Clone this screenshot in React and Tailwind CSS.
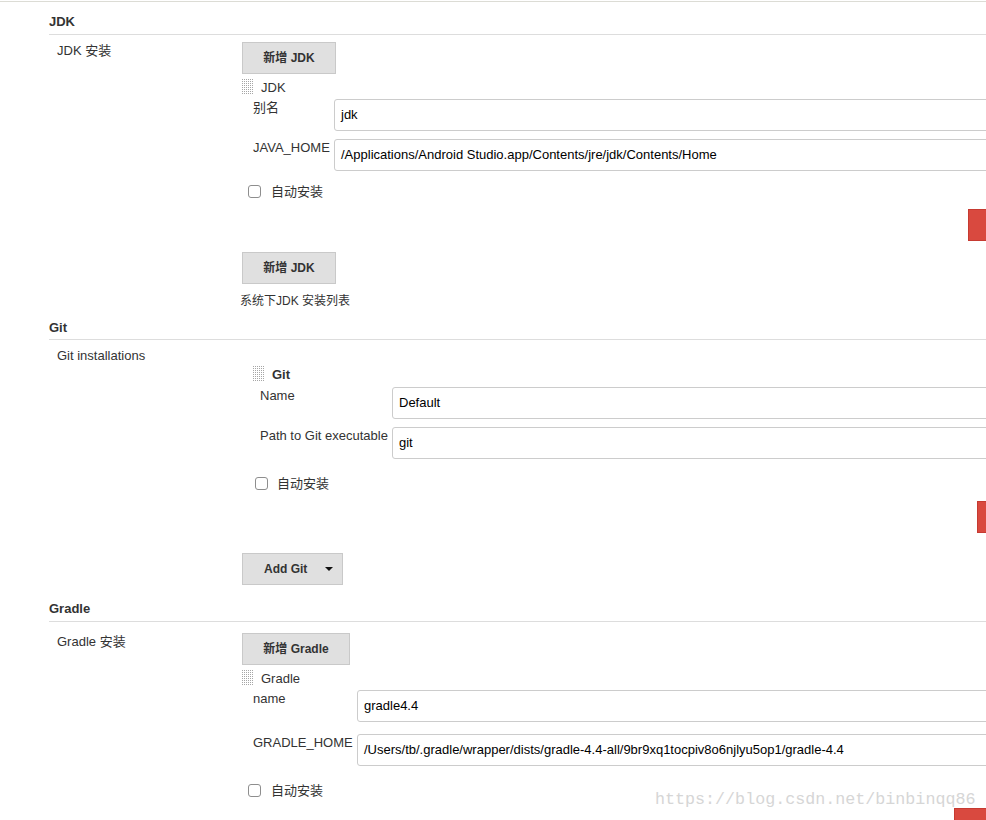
import React from 'react';

const Handle = ({ id }) => (
  <svg width="11" height="16" className="shrink-0">
    <defs>
      <pattern id={id} width="2" height="2" patternUnits="userSpaceOnUse">
        <rect width="1" height="1" fill="#a6a6a6" />
      </pattern>
    </defs>
    <rect width="11" height="16" fill={`url(#${id})`} />
  </svg>
);

const Btn = ({ children, className }) => (
  <div
    className={
      'flex items-center justify-center h-[32px] bg-[#e0e0e0] border border-[#c9c9c9] font-bold text-[12px] text-[#333] ' +
      className
    }
  >
    {children}
  </div>
);

const Field = ({ label, value, labelClass, className }) => (
  <div className={'flex ' + className}>
    <div className={'shrink-0 leading-4 pt-px ' + labelClass}>{label}</div>
    <div className="flex-1 h-[32px] border border-[#cccccc] rounded-[3px] flex items-center px-[6px] text-black">
      {value}
    </div>
  </div>
);

const AutoInstall = ({ className }) => (
  <div className={'flex items-center h-4 ' + className}>
    <span className="w-[13px] h-[13px] border border-[#8e8e8e] rounded-[3px] bg-white" />
    <span className="pt-px">自动安装</span>
  </div>
);

// delete button: only its left edge shows inside the window
const DeleteBtn = ({ className }) => (
  <div
    aria-label="删除"
    className={'h-[32px] w-[120px] bg-[#d9493f] border border-[#c63a31] ' + className}
  />
);

const SectionHeader = ({ title, className }) => (
  <div className={'flex items-end font-bold border-b border-[#dddddd] ' + className}>{title}</div>
);

export default function App() {
  return (
    <div className="relative w-[986px] h-[820px] overflow-hidden bg-white font-['Liberation_Sans','Noto_Sans_CJK_SC',sans-serif] text-[13px] leading-4 text-[#333]">
      <div className="mt-px border-t border-[#dcdcd5]" />
      <div className="pl-[49px] w-[1100px]">
        {/* JDK */}
        <SectionHeader title="JDK" className="h-[33px] pb-[4px]" />
        <div className="flex">
          <div className="w-[193px] shrink-0 pl-[8px] pt-[8px]">JDK 安装</div>
          <div className="w-[800px] pt-[7px]">
            <Btn className="w-[94px]">新增 JDK</Btn>
            <div className="mt-[5px] flex items-center h-4">
              <Handle id="h1" />
              <span className="ml-[8px] pt-px">JDK</span>
            </div>
            <Field label="别名" value="jdk" labelClass="w-[92px] pl-[11px]" className="mt-[4px]" />
            <Field
              label="JAVA_HOME"
              value="/Applications/Android Studio.app/Contents/jre/jdk/Contents/Home"
              labelClass="w-[92px] pl-[11px]"
              className="mt-[8px]"
            />
            <AutoInstall className="mt-[12px] pl-[6px] gap-[10px]" />
            <DeleteBtn className="mt-[10px] ml-[726px]" />
            <Btn className="w-[94px] mt-[11px]">新增 JDK</Btn>
            <div className="mt-[8px] pt-px -ml-[2px] text-[12px]">系统下JDK 安装列表</div>
          </div>
        </div>

        {/* Git */}
        <SectionHeader title="Git" className="h-[31px] pb-[3px]" />
        <div className="flex">
          <div className="w-[193px] shrink-0 pl-[8px] pt-[8px]">Git installations</div>
          <div className="w-[800px] pt-[26px]">
            <div className="pl-[11px]">
              <div className="flex items-center h-4">
                <Handle id="h2" />
                <span className="ml-[8px] pt-px font-bold">Git</span>
              </div>
              <Field label="Name" value="Default" labelClass="w-[139px] pl-[7px]" className="mt-[5px]" />
              <Field label="Path to Git executable" value="git" labelClass="w-[139px] pl-[7px]" className="mt-[8px]" />
              <AutoInstall className="mt-[16px] pl-[2px] gap-[9px]" />
              <DeleteBtn className="mt-[10px] ml-[724px]" />
            </div>
            <Btn className="w-[101px] mt-[20px] !justify-start pl-[21px]">
              <span>Add Git</span>
              <svg width="8" height="5" className="ml-[18px]">
                <path d="M0 0 L8 0 L4 4 Z" fill="#111" />
              </svg>
            </Btn>
          </div>
        </div>

        {/* Gradle */}
        <SectionHeader title="Gradle" className="h-[37px] pb-[4px]" />
        <div className="flex">
          <div className="w-[193px] shrink-0 pl-[8px] pt-[12px]">Gradle 安装</div>
          <div className="w-[800px] pt-[11px]">
            <Btn className="w-[108px]">新增 Gradle</Btn>
            <div className="mt-[5px] flex items-center h-4">
              <Handle id="h3" />
              <span className="ml-[8px] pt-px">Gradle</span>
            </div>
            <Field label="name" value="gradle4.4" labelClass="w-[115px] pl-[11px]" className="mt-[4px]" />
            <Field
              label="GRADLE_HOME"
              value="/Users/tb/.gradle/wrapper/dists/gradle-4.4-all/9br9xq1tocpiv8o6njlyu5op1/gradle-4.4"
              labelClass="w-[115px] pl-[11px]"
              className="mt-[12px]"
            />
            <AutoInstall className="mt-[16px] pl-[6px] gap-[10px]" />
            <DeleteBtn className="mt-[10px] ml-[712px]" />
          </div>
        </div>
      </div>

      <div className="absolute left-[655px] top-[790px] font-['Liberation_Mono',monospace] text-[16.7px] leading-5 text-[#d6d6d6]">
        https://blog.csdn.net/binbinqq86
      </div>
    </div>
  );
}
